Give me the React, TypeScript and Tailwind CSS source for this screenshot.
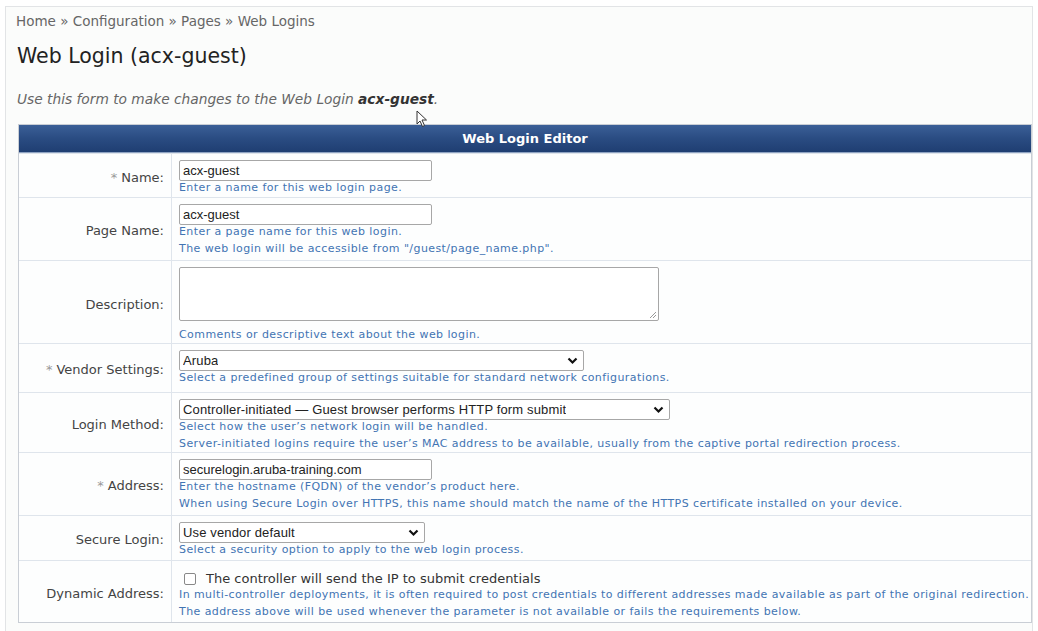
import React from 'react';

const help = 'text-[11px] leading-[16.5px] text-[#4274b3] tracking-[0.42px]';
const field =
  'h-[21px] border border-[#a7a7a7] rounded-[2px] bg-white px-[3px] text-[13px] text-[#222] font-["Liberation_Sans",Arial,sans-serif] outline-none';

const Chevron = () => (
  <svg width="11" height="8" viewBox="0 0 11 8" className="shrink-0">
    <path d="M1.5 1.5 L5.5 5.5 L9.5 1.5" fill="none" stroke="#111" strokeWidth="2.2" />
  </svg>
);

const FakeSelect = ({ value, width }: { value: string; width: string }) => (
  <div className={`${field} ${width} flex items-center justify-between pr-[5px]`}>
    <span className="truncate tracking-[0.15px]">{value}</span>
    <Chevron />
  </div>
);

interface RowProps {
  label: string;
  required?: boolean;
  height: string;
  children: React.ReactNode;
}

const Row: React.FC<RowProps> = ({ label, required, height, children }) => (
  <div className={`grid grid-cols-[153px_1fr] border-t border-[#dfe5ec] ${height}`}>
    <div className="flex items-center justify-end pr-[7px] pt-[4px] border-r border-[#dfe5ec] text-[13px] text-[#444]">
      {required && <span className="text-[#999] mr-[4px]">*</span>}
      {label}:
    </div>
    <div className="pl-[7px] pt-[6px]">{children}</div>
  </div>
);

export default function App() {
  return (
    <div className="w-[1038px] h-[631px] bg-white overflow-hidden font-['DejaVu_Sans',Verdana,sans-serif]">
      <div className="relative ml-[5px] mt-[6px] w-[1028px] h-[640px] border-l border-t border-r border-[#e2e4e6] bg-[#fbfcfb]">
        {/* Breadcrumb */}
        <div className="pl-[10px] pt-[6px] text-[13.5px] text-[#666] leading-[16px]">
          Home » Configuration » Pages » Web Logins
        </div>

        {/* Title */}
        <h1 className="pl-[11px] mt-[15px] text-[20.5px] text-[#222] leading-[24px]">
          Web Login (acx-guest)
        </h1>

        {/* Intro */}
        <p className="pl-[11px] mt-[23px] text-[13.75px] italic text-[#666] leading-[16px]">
          Use this form to make changes to the Web Login <b className="text-[#333]">acx-guest</b>.
        </p>

        {/* Cursor */}
        <svg className="absolute left-[410px] top-[103px]" width="12" height="18" viewBox="0 0 12 18">
          <path d="M1 1 L1 14 L4 11 L6.5 16.5 L8.5 15.5 L6 10 L10.5 10 Z" fill="#fff" stroke="#333" strokeWidth="1" />
        </svg>

        {/* Editor */}
        <div className="ml-[12px] mt-[17px] w-[1014px] border border-[#c9ced5] bg-[#fdfefe]">
          <div className="h-[28px] flex items-center justify-center bg-gradient-to-b from-[#3b5f97] via-[#2a4c82] to-[#1f3e72] border-b border-[#8fa3c2] text-white font-bold text-[13px]">
            Web Login Editor
          </div>

          <Row label="Name" required height="h-[44px]">
            <div className={`${field} w-[253px] flex items-center`}>acx-guest</div>
            <div className={`${help} mt-[-1px]`}>Enter a name for this web login page.</div>
          </Row>

          <Row label="Page Name" height="h-[63px]">
            <div className={`${field} w-[253px] flex items-center`}>acx-guest</div>
            <div className={`${help} mt-[-1px]`}>
              Enter a page name for this web login.
              <br />
              The web login will be accessible from "/guest/page_name.php".
            </div>
          </Row>

          <Row label="Description" height="h-[83px]">
            <div className="relative w-[480px] h-[54px] border border-[#a7a7a7] rounded-[2px] bg-white">
              <svg className="absolute right-[1px] bottom-[1px]" width="9" height="9" viewBox="0 0 9 9">
                <path d="M8 2 L2 8 M8 5 L5 8" stroke="#999" strokeWidth="1" />
              </svg>
            </div>
            <div className={`${help} mt-[6px]`}>Comments or descriptive text about the web login.</div>
          </Row>

          <Row label="Vendor Settings" required height="h-[49px]">
            <FakeSelect value="Aruba" width="w-[405px]" />
            <div className={`${help} mt-[-1px]`}>
              Select a predefined group of settings suitable for standard network configurations.
            </div>
          </Row>

          <Row label="Login Method" height="h-[60px]">
            <FakeSelect
              value="Controller-initiated — Guest browser performs HTTP form submit"
              width="w-[491px]"
            />
            <div className={`${help} mt-[-1px]`}>
              Select how the user’s network login will be handled.
              <br />
              Server-initiated logins require the user’s MAC address to be available, usually from the captive
              portal redirection process.
            </div>
          </Row>

          <Row label="Address" required height="h-[63px]">
            <div className={`${field} w-[253px] flex items-center`}>securelogin.aruba-training.com</div>
            <div className={`${help} mt-[-1px]`}>
              Enter the hostname (FQDN) of the vendor’s product here.
              <br />
              When using Secure Login over HTTPS, this name should match the name of the HTTPS certificate
              installed on your device.
            </div>
          </Row>

          <Row label="Secure Login" height="h-[45px]">
            <FakeSelect value="Use vendor default" width="w-[246px]" />
            <div className={`${help} mt-[-1px]`}>Select a security option to apply to the web login process.</div>
          </Row>

          <Row label="Dynamic Address" height="h-[62px]">
            <div className="flex items-center h-[20px] mt-[2px]">
              <span className="ml-[5px] w-[12px] h-[12px] border border-[#888] rounded-[2px] bg-white" />
              <span className="ml-[10px] text-[13px] text-[#333]">
                The controller will send the IP to submit credentials
              </span>
            </div>
            <div className={`${help} mt-[-2px] whitespace-nowrap`}>
              In multi-controller deployments, it is often required to post credentials to different addresses
              made available as part of the original redirection.
              <br />
              The address above will be used whenever the parameter is not available or fails the requirements
              below.
            </div>
          </Row>
        </div>
      </div>
    </div>
  );
}
